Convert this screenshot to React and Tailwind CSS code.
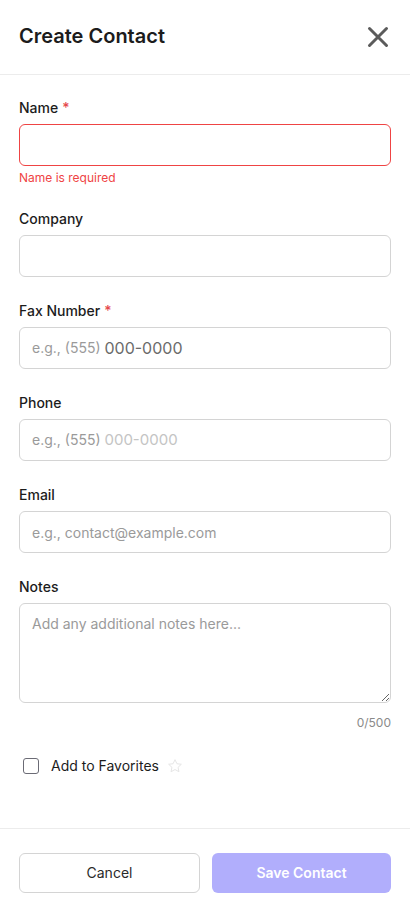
import React from "react";

const Label = ({ children, required }) => (
  <label className="block text-sm font-medium text-[#1c1c1c] leading-5 mb-1.5">
    {children}
    {required && <span className="text-[#e5484d] ml-1">*</span>}
  </label>
);

const inputBase =
  "w-full h-[42px] rounded-md border bg-white px-3 text-sm text-[#1c1c1c] placeholder:text-[#9a9a9a] outline-none";

export default function App() {
  return (
    <div
      className="h-[912px] w-full bg-white flex flex-col"
      style={{ fontFamily: "Inter, 'Noto Sans', sans-serif" }}
    >
      {/* Header */}
      <div className="h-[75px] shrink-0 border-b border-[#ececec] flex items-center justify-between pl-[19px] pr-5">
        <h2 className="text-xl font-semibold text-[#1c1c1c] -mt-0.5">Create Contact</h2>
        <button className="p-1 -mr-1 -mt-px">
          <svg width="24" height="24" viewBox="0 0 24 24" fill="none">
            <path
              d="M3.5 3.5 L20.5 20.5 M20.5 3.5 L3.5 20.5"
              stroke="#5b5b5b"
              strokeWidth="3"
              strokeLinecap="round"
            />
          </svg>
        </button>
      </div>

      {/* Body */}
      <div className="flex-1 px-[19px] pt-[23px]">
        <div>
          <Label required>Name</Label>
          <input className={`${inputBase} border-[#ef4444]`} />
          <p className="mt-1 text-xs leading-4 text-[#ef4444]">Name is required</p>
        </div>

        <div className="mt-[23px]">
          <Label>Company</Label>
          <input className={`${inputBase} border-[#d4d4d4]`} />
        </div>

        <div className="mt-6">
          <Label required>Fax Number</Label>
          <div className={`${inputBase} border-[#d4d4d4] flex items-center`}>
            <span className="text-[#9a9a9a]">e.g., (555)&nbsp;</span>
            <span className="text-base text-[#6b6b6b]">000-0000</span>
          </div>
        </div>

        <div className="mt-6">
          <Label>Phone</Label>
          <div className={`${inputBase} border-[#d4d4d4] flex items-center`}>
            <span className="text-[#9a9a9a]">e.g., (555)&nbsp;</span>
            <span className="text-[15px] text-[#c4c4c4]">000-0000</span>
          </div>
        </div>

        <div className="mt-6">
          <Label>Email</Label>
          <input
            className={`${inputBase} border-[#d4d4d4]`}
            placeholder="e.g., contact@example.com"
          />
        </div>

        <div className="mt-6">
          <Label>Notes</Label>
          <textarea
            className="block w-full h-[100px] rounded-md border border-[#d4d4d4] px-3 py-2.5 text-sm placeholder:text-[#9a9a9a] outline-none"
            placeholder="Add any additional notes here..."
          />
          <p className="mt-3 text-right text-xs leading-4 text-[#8a8a8a]">0/500</p>
        </div>

        <div className="mt-[25px] flex items-center pl-1">
          <span className="w-4 h-4 rounded-[3px] border border-[#6b6b75] bg-white" />
          <span className="ml-3 text-sm text-[#1c1c1c]">Add to Favorites</span>
          <svg className="ml-2" width="16" height="16" viewBox="0 0 24 24" fill="none">
            <path
              d="M12 2.5l2.9 6.1 6.6.8-4.9 4.6 1.3 6.6L12 17.3l-5.9 3.3 1.3-6.6-4.9-4.6 6.6-.8z"
              stroke="#e6e6e6"
              strokeWidth="1.5"
              strokeLinejoin="round"
            />
          </svg>
        </div>
      </div>

      {/* Footer */}
      <div className="shrink-0 border-t border-[#ececec] px-[19px] pt-6 pb-[19px] flex gap-3">
        <button className="flex-1 h-10 rounded-md border border-[#d4d4d4] bg-white text-sm text-[#2a2a2a]">
          Cancel
        </button>
        <button className="flex-1 h-10 rounded-md bg-[#b1aefc] text-sm font-semibold text-white">
          Save Contact
        </button>
      </div>
    </div>
  );
}
